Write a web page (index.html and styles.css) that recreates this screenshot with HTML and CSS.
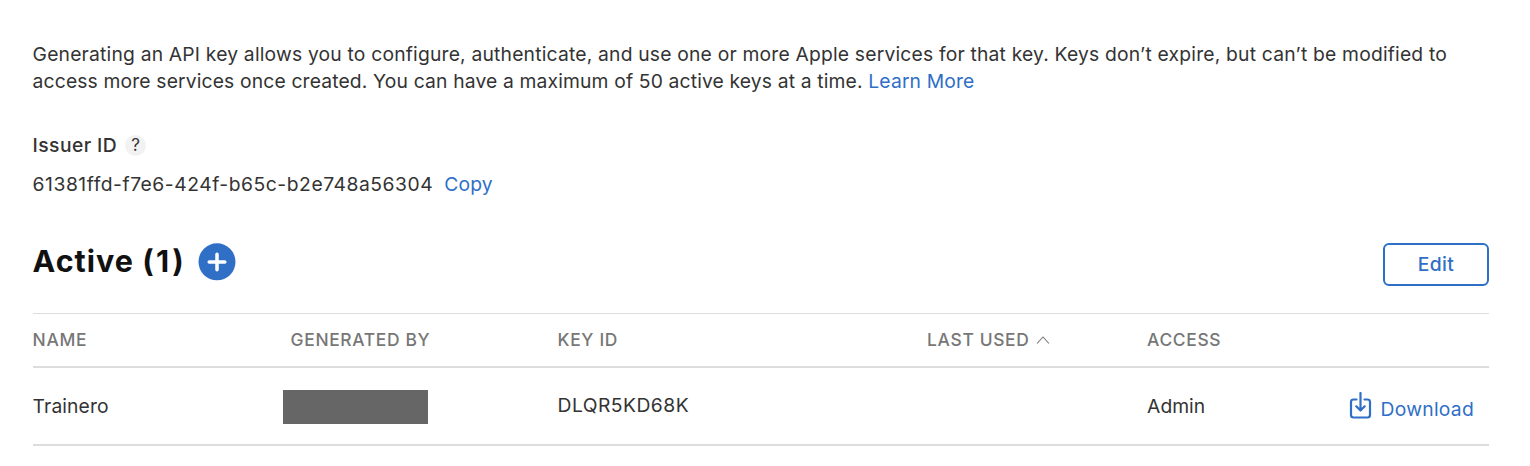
FILE: index.html
```html
<!DOCTYPE html>
<html lang="en">
<head>
<meta charset="utf-8">
<title>Keys</title>
<link rel="stylesheet" href="styles.css">
</head>
<body>
<main class="page">
  <p class="intro"><span class="line line-one">Generating an API key allows you to configure, authenticate, and use one or more Apple services for that key. Keys don’t expire, but can’t be modified to</span> <span class="line line-two">access more services once created. You can have a maximum of 50 active keys at a time. <a href="#">Learn More</a></span></p>
  <div class="issuer-label"><span class="issuer-title">Issuer ID</span><span class="help">?</span></div>
  <div class="issuer-value"><span class="uuid">61381ffd-f7e6-424f-b65c-b2e748a56304</span><a class="copy" href="#">Copy</a></div>
  <header class="heading">
    <h2>Active <span class="count">(1)</span></h2>
    <svg class="add" viewBox="0 0 38 38"><circle cx="19" cy="18.800" r="18.500" fill="#2f6fc6"/><path d="M19 11.200v15.600M11.200 19h15.600" stroke="#fff" stroke-width="3.500" stroke-linecap="round"/></svg>
    <button class="edit"><span>Edit</span></button>
  </header>
  <section class="table">
    <div class="row head">
      <span>NAME</span><span>GENERATED BY</span><span>KEY ID</span>
      <span>LAST USED<svg class="caret" viewBox="0 0 14 10"><path d="M1 7.500L7 1L13 7.500" fill="none" stroke="#777" stroke-width="1.1"/></svg></span><span class="h-acc">ACCESS</span><span></span>
    </div>
    <div class="row item">
      <span class="name">Trainero</span><span><i class="redacted"></i></span><span class="key">DLQR5KD68K</span><span></span><span class="access">Admin</span>
      <a class="download" href="#"><svg viewBox="0 0 24 28"><path d="M7.500 7.500H4.500Q2 7.500 2 10V23Q2 25.500 4.500 25.500H18.500Q21 25.500 21 23V10Q21 7.500 18.500 7.500H15.500M11.500 1V18.300M7.300 14.300L11.500 18.500L15.700 14.300" fill="none" stroke="#2f6fc6" stroke-width="2.200" stroke-linecap="round" stroke-linejoin="round"/></svg><span class="dl-text">Download</span></a>
    </div>
  </section>
</main>
</body>
</html>
```
FILE: styles.css
```css
* { box-sizing: border-box; }
body { margin: 0; background: #fff; color: #333; font: 19.3px/27px Inter, sans-serif; }
a { color: #2f6fc6; text-decoration: none; }
.page { padding: 41px 41px 0 32.6px; height: 466px; overflow: hidden; }
.intro { margin: 0; }
.line { display: block; white-space: nowrap; }
.line-one { letter-spacing: 0.19px; }
.line-two { letter-spacing: 0.15px; }
.issuer-label { display: flex; align-items: center; gap: 8px; margin-top: 37px; height: 27px; font-weight: 500; }
.issuer-title { letter-spacing: 0.42px; }
.help { width: 21px; height: 21px; border-radius: 50%; background: #f2f2f2; font-size: 17px; font-weight: 400; line-height: 21px; text-align: center; }
.issuer-value { display: flex; gap: 11px; margin-top: 12px; }
.uuid { letter-spacing: 0.53px; }
.copy { letter-spacing: 0.2px; }
.heading { display: flex; height: 43px; margin-top: 45px; }
.heading h2 { margin: 0; font-size: 30.5px; line-height: 36px; letter-spacing: 1px; color: #111; }
.count { letter-spacing: 2.4px; }
.add { width: 38px; height: 38px; margin-left: 12.4px; }
.edit { width: 106px; height: 43px; margin-left: auto; padding: 0 0 2px; border: 2px solid #2f6fc6; border-radius: 6px; background: #fff; color: #2f6fc6; font: 500 19.3px Inter, sans-serif; letter-spacing: 0.4px; }
.table { margin-top: 27px; border-top: 1px solid #ddd; }
.row { display: grid; grid-template-columns: 258px 267px 369.5px 220px 203px 1fr; align-items: center; white-space: nowrap; }
.head { height: 54px; padding-bottom: 1px; border-bottom: 2px solid #ddd; color: #777; font-size: 17.4px; font-weight: 500; letter-spacing: 0.66px; }
.caret { width: 14px; height: 10px; margin-left: 7px; }
.item { height: 78px; border-bottom: 2px solid #ddd; }
.name { letter-spacing: 0.1px; }
.key { padding-bottom: 2px; letter-spacing: 0.46px; }
.redacted { display: block; width: 145px; height: 34px; margin: 2px 0 0 -7.6px; background: #666; }
.download { display: flex; align-items: center; gap: 7.5px; margin-left: -1px; }
.download svg { width: 24px; height: 28px; }
.dl-text { padding-top: 6px; letter-spacing: 0.25px; }
```
